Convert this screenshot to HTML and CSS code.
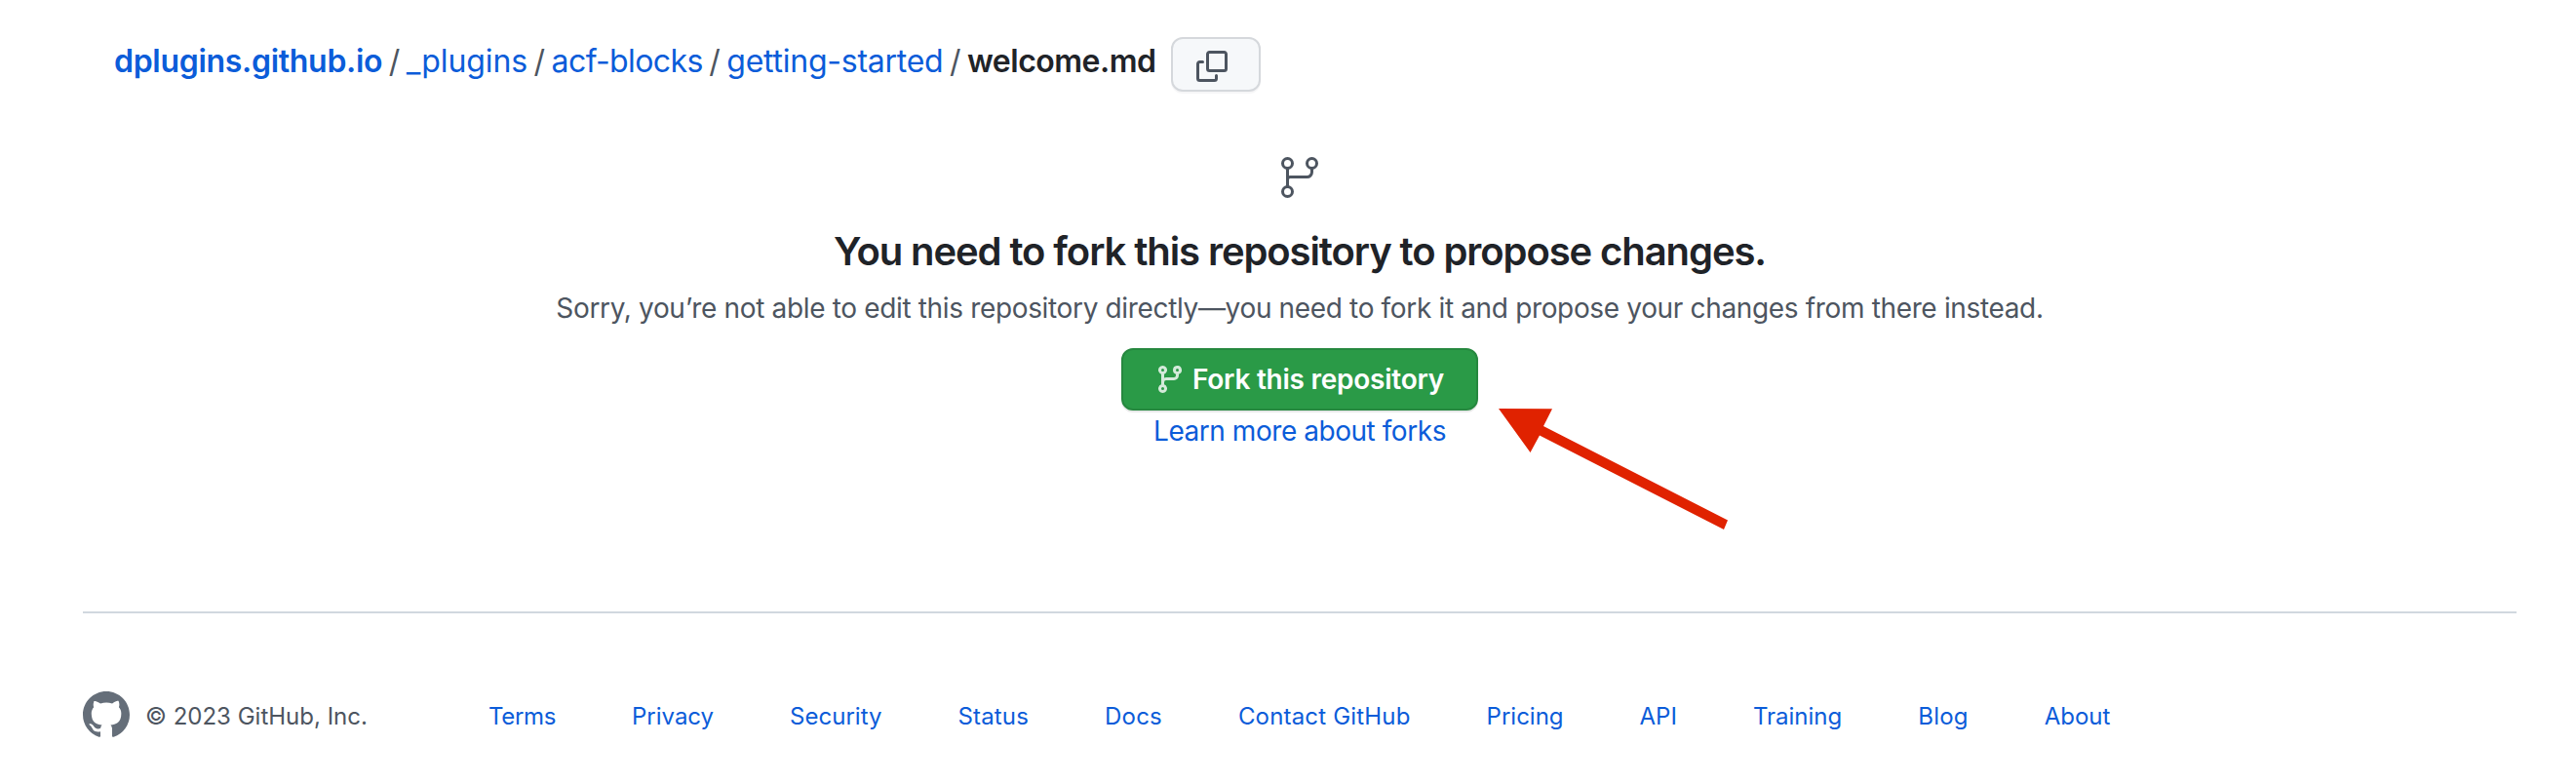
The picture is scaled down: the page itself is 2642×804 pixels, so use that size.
FILE: index.html
```
<!DOCTYPE html>
<html lang="en">
<head>
<meta charset="utf-8">
<title>Fork this repository</title>
<link rel="stylesheet" href="styles.css">
</head>
<body>
<nav class="breadcrumb">
  <a class="crumb root" href="#">dplugins.github.io</a><span class="sep">/</span>
  <a class="crumb plugins" href="#">_plugins</a><span class="sep">/</span>
  <a class="crumb blocks" href="#">acf-blocks</a><span class="sep">/</span>
  <a class="crumb started" href="#">getting-started</a><span class="sep">/</span>
  <span class="file">welcome.md</span>
  <button class="copy" aria-label="Copy path">
    <svg width="32" height="32" viewBox="0 0 16 16" fill="currentColor"><path d="M0 6.75C0 5.784.784 5 1.75 5h1.5a.75.75 0 0 1 0 1.5h-1.5a.25.25 0 0 0-.25.25v7.5c0 .138.112.25.25.25h7.5a.25.25 0 0 0 .25-.25v-1.5a.75.75 0 0 1 1.5 0v1.5A1.75 1.75 0 0 1 9.250 16h-7.5A1.75 1.75 0 0 1 0 14.250Z"/><path d="M5 1.75C5 .784 5.784 0 6.75 0h7.5C15.216 0 16 .784 16 1.75v7.5A1.75 1.75 0 0 1 14.25 11h-7.5A1.75 1.75 0 0 1 5 9.25Zm1.75-.25a.25.25 0 0 0-.25.25v7.5c0 .138.112.25.25.25h7.5a.25.25 0 0 0 .25-.25v-7.5a.25.25 0 0 0-.25-.25Z"/></svg>
  </button>
</nav>
<main class="blank">
  <svg class="branch" width="48" height="48" viewBox="0 0 24 24" fill="none" stroke="currentColor" stroke-width="1.5"><circle cx="5.75" cy="4.75" r="2.5"/><circle cx="18.25" cy="4.75" r="2.5"/><circle cx="5.75" cy="19.25" r="2.5"/><path d="M5.75 7.25v9.5M5.75 13.2c0-.8.6-1.4 1.4-1.4h8.6a2.5 2.5 0 0 0 2.5-2.500V7.250"/></svg>
  <h1 class="title">You need to fork this repository to propose changes.</h1>
  <p class="text">Sorry, you’re not able to edit this repository directly—you need to fork it and propose your changes from there instead.</p>
  <button class="fork">
    <svg width="32" height="32" viewBox="0 0 16 16" fill="currentColor"><path d="M9.5 3.25a2.25 2.25 0 1 1 3 2.122V6A2.5 2.5 0 0 1 10 8.5H6a1 1 0 0 0-1 1v1.128a2.251 2.251 0 1 1-1.5 0V5.372a2.25 2.25 0 1 1 1.5 0v1.836A2.493 2.493 0 0 1 6 7h4a1 1 0 0 0 1-1v-.628A2.25 2.25 0 0 1 9.5 3.25Zm-6 0a.75.75 0 1 0 1.5 0 .75.75 0 0 0-1.5 0Zm8.25-.75a.75.75 0 1 0 0 1.5.75.75 0 0 0 0-1.5ZM4.25 12a.75.75 0 1 0 0 1.5.75.75 0 0 0 0-1.5Z"/></svg>
    <span>Fork this repository</span>
  </button>
  <a class="learn" href="#">Learn more about forks</a>
  <svg class="arrow" width="240" height="128" viewBox="0 0 240 128" fill="#e02200"><path d="M0 0 55 .2 46 18 235 114.500 231 124 42 27.500 32.500 45Z"/></svg>
</main>
<footer class="footer">
  <svg class="mark" width="48" height="48" viewBox="0 0 16 16" fill="currentColor"><path d="M8 0c4.42 0 8 3.58 8 8a8.013 8.013 0 0 1-5.45 7.59c-.4.08-.55-.17-.55-.38 0-.27.01-1.13.01-2.2 0-.75-.25-1.23-.54-1.48 1.78-.2 3.65-.88 3.65-3.95 0-.88-.31-1.59-.82-2.15.08-.2.36-1.02-.08-2.12 0 0-.67-.22-2.2.82-.64-.18-1.32-.27-2-.27-.68 0-1.36.09-2 .27-1.53-1.03-2.2-.82-2.2-.82-.44 1.1-.16 1.92-.08 2.12-.51.56-.82 1.28-.82 2.15 0 3.06 1.86 3.75 3.64 3.95-.23.2-.44.55-.51 1.07-.46.21-1.61.55-2.33-.66-.15-.24-.6-.83-1.23-.82-.67.01-.27.38.01.53.34.19.73.9.82 1.13.16.45.68 1.31 2.69.94 0 .67.01 1.3.01 1.49 0 .21-.15.45-.55.38A7.995 7.995 0 0 1 0 8c0-4.42 3.58-8 8-8Z"/></svg>
  <span class="copyright">© 2023 GitHub, Inc.</span>
  <div class="links">
    <a class="tight" href="#">Terms</a><a href="#">Privacy</a><a href="#">Security</a><a class="loose" href="#">Status</a><a class="loose" href="#">Docs</a><a class="loose" href="#">Contact GitHub</a><a href="#">Pricing</a><a href="#">API</a><a href="#">Training</a><a class="loose" href="#">Blog</a><a href="#">About</a>
  </div>
</footer>
</body>
</html>
```
FILE: styles.css
```
* { box-sizing: border-box; }
body {
  margin: 0;
  height: 804px;
  background: #fff;
  color: #1f2328;
  font-family: Inter, "Liberation Sans", sans-serif;
  overflow: hidden;
}
a { color: #0b5cd9; text-decoration: none; }
button { font: inherit; margin: 0; }
svg { display: block; flex: none; }

.breadcrumb {
  display: flex;
  align-items: flex-start;
  height: 158px;
  padding: 38px 0 0 117px;
  font-size: 32px;
  line-height: 50px;
}
.root, .file { font-weight: 600; }
.root { letter-spacing: -.3px; }
.plugins { letter-spacing: -.1px; }
.blocks { letter-spacing: -.6px; }
.started { letter-spacing: -.25px; }
.file { letter-spacing: -.5px; }
.sep { color: #4d5560; margin: 0 6.5px; }
.copy {
  display: flex;
  align-items: center;
  width: 92px;
  height: 56px;
  margin-left: 15.7px;
  padding: 4px 0 0 24px;
  color: #4d5560;
  background: #f6f8fa;
  border: 2px solid #d5d8dc;
  border-radius: 12px;
  box-shadow: 0 2px 0 rgba(31, 35, 40, .04);
}

.blank {
  position: relative;
  display: flex;
  flex-direction: column;
  align-items: center;
  height: 469px;
  margin: 0 61px 0 85px;
}
.branch { color: #4d5560; }
.title {
  margin: 22px 0 0;
  font-size: 40px;
  font-weight: 600;
  line-height: 60px;
  letter-spacing: -1.09px;
  white-space: nowrap;
}
.text {
  margin: 7px 0 0;
  color: #4d5560;
  font-size: 28px;
  line-height: 42px;
  letter-spacing: -.345px;
  white-space: nowrap;
}
.fork {
  display: flex;
  align-items: center;
  width: 366px;
  height: 64px;
  margin-top: 20px;
  padding: 0 0 0 32px;
  gap: 7px;
  color: #fff;
  background: #2a9a47;
  border: 2px solid #26883f;
  border-radius: 12px;
  box-shadow: 0 2px 0 rgba(31, 35, 40, .1);
  font-size: 28px;
  font-weight: 600;
  letter-spacing: -.25px;
  white-space: nowrap;
}
.fork svg { opacity: .8; }
.learn { font-size: 28px; line-height: 42px; letter-spacing: -.45px; }
.arrow { position: absolute; left: 1451.5px; top: 261px; }

.footer {
  display: flex;
  align-items: center;
  height: 177px;
  margin: 0 61px 0 85px;
  padding: 68px 0 35px;
  border-top: 2px solid #d1d8df;
  color: #4d5560;
  font-size: 24px;
  line-height: 36px;
  white-space: nowrap;
}
.mark { color: #656e79; }
.copyright { width: 352px; padding: 4px 0 0 16px; }
.links { display: flex; gap: 78px; margin-left: 16px; padding-top: 4px; }
.tight { letter-spacing: -.35px; }
.loose { letter-spacing: .18px; }
```
